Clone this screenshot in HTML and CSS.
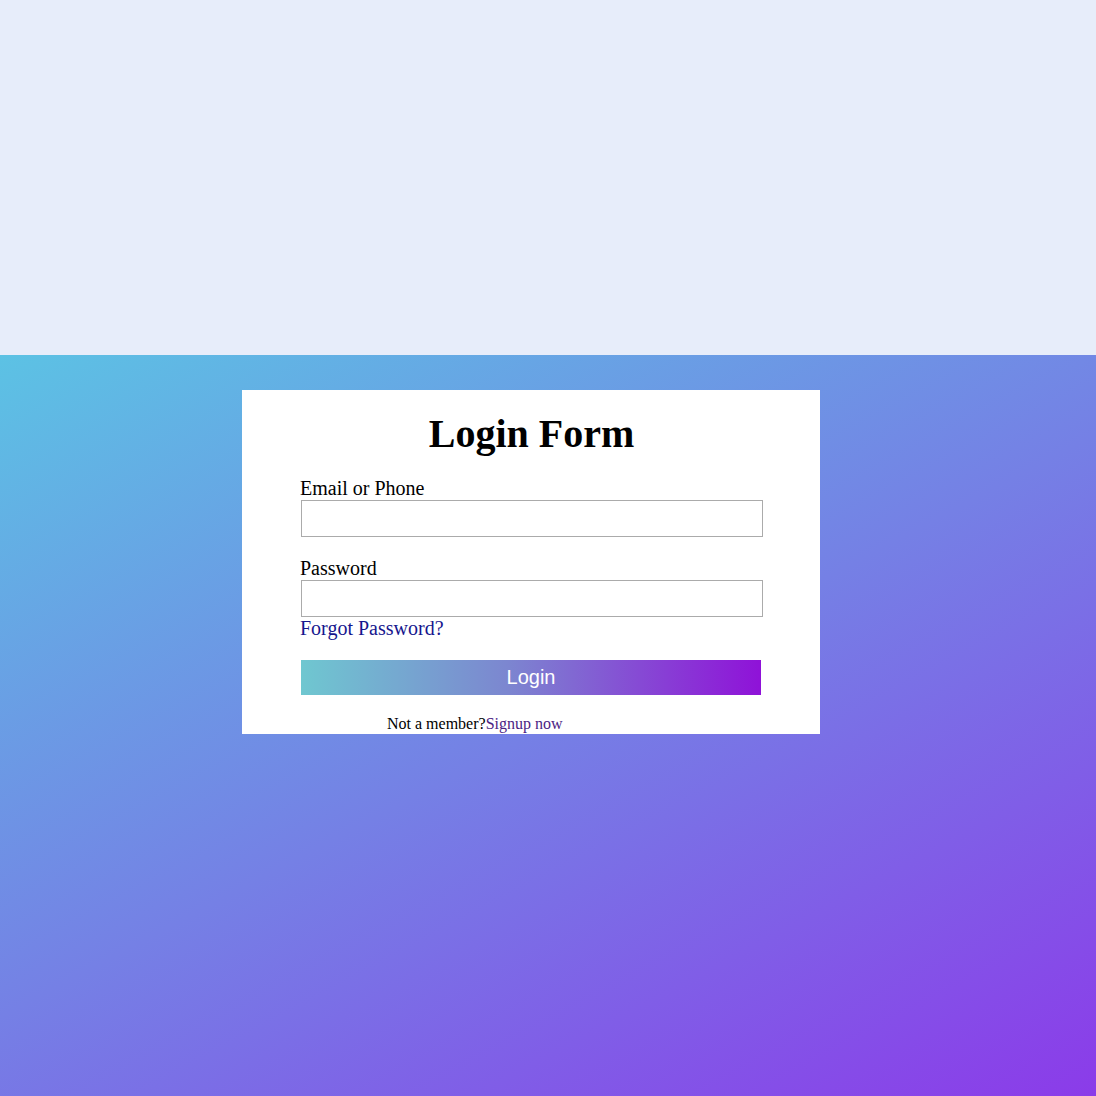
FILE: index.html
```html
<!DOCTYPE html>
<html>
<head>
<meta charset="utf-8">
<link rel="stylesheet" href="styles.css">
</head>
<body>
<div class="top"></div>
<div class="stage">
  <div class="card">
    <h1 class="title">Login Form</h1>
    <form class="form">
      <label class="label">Email or Phone</label>
      <input class="input" type="text">
      <label class="label gap">Password</label>
      <input class="input" type="password">
      <a class="forgot" href="#">Forgot Password?</a>
      <button class="btn" type="button">Login</button>
      <p class="signup">Not a member?<a class="signup-link" href="#">Signup now</a></p>
    </form>
  </div>
</div>
</body>
</html>
```

FILE: styles.css
```css
html, body {
  margin: 0;
  padding: 0;
}
body {
  font-family: "Liberation Serif", "Times New Roman", serif;
  background: #e7edfa;
}
.top {
  height: 355px;
  background: #e7edfa;
}
.stage {
  height: 741px;
  background: linear-gradient(152deg, #5cc2e4, #7580e5 50%, #8b3be9);
  padding-top: 35px;
  padding-left: 242px;
  box-sizing: border-box;
}
.card {
  width: 578px;
  height: 344px;
  background: #fff;
  box-sizing: border-box;
  padding: 21px 57px 0 58px;
  overflow: hidden;
}
.title {
  margin: 0;
  font-size: 40px;
  line-height: 46px;
  font-weight: bold;
  text-align: center;
  color: #000;
}
.form {
  display: flex;
  flex-direction: column;
  margin-top: 20px;
}
.label {
  font-size: 20px;
  line-height: 23px;
  color: #000;
}
.label.gap {
  margin-top: 20px;
}
.input {
  width: 462px;
  height: 37px;
  box-sizing: border-box;
  border: 1px solid #ababab;
  margin: 0 0 0 1px;
  padding: 0;
  background: #fff;
}
.forgot {
  font-size: 20px;
  line-height: 23px;
  color: #16168e;
  text-decoration: none;
  align-self: flex-start;
}
.btn {
  margin: 20px 0 0 1px;
  width: 460px;
  height: 35px;
  border: none;
  padding: 0;
  background: linear-gradient(to right, #6fc7d0, #7c86d0 45%, #8f12d8);
  color: #fff;
  font-family: "Liberation Sans", Arial, sans-serif;
  font-size: 20px;
}
.signup {
  margin: 19px 0 0 87px;
  font-size: 16px;
  line-height: 19px;
  color: #000;
}
.signup-link {
  color: #4b2383;
  text-decoration: none;
}
```
